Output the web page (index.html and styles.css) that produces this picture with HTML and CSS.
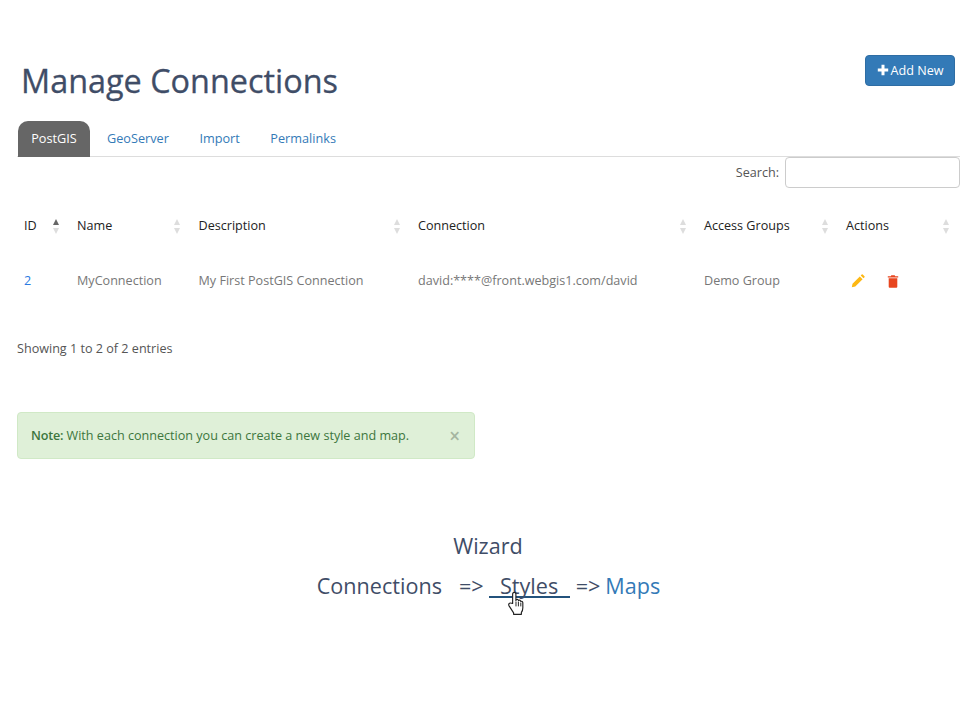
FILE: index.html
```html
<!DOCTYPE html>
<html lang="en">
<head>
<meta charset="utf-8">
<title>Manage Connections</title>
<link rel="stylesheet" href="styles.css">
</head>
<body>
<main class="page">
  <header class="head">
    <h1 class="title">Manage Connections</h1>
    <a class="btn-add" href="#"><svg class="plus" viewBox="0 0 12 12" width="12" height="12"><path d="M4.500 0.800h3v3.700h3.700v3H7.500v3.700h-3V7.500H0.800v-3h3.700z" fill="#fff"/></svg>Add New</a>
  </header>
  <nav class="tabs">
    <a class="tab active" href="#">PostGIS</a>
    <a class="tab" href="#">GeoServer</a>
    <a class="tab" href="#">Import</a>
    <a class="tab" href="#">Permalinks</a>
  </nav>
  <div class="search"><label class="search-label" for="q">Search:</label><input class="search-input" id="q" type="text"></div>
  <table class="grid">
    <colgroup><col class="c1"><col class="c2"><col class="c3"><col class="c4"><col class="c5"><col class="c6"></colgroup>
    <thead>
      <tr>
        <th>ID<span class="sort asc"></span></th>
        <th>Name<span class="sort"></span></th>
        <th>Description<span class="sort"></span></th>
        <th>Connection<span class="sort"></span></th>
        <th>Access Groups<span class="sort"></span></th>
        <th>Actions<span class="sort"></span></th>
      </tr>
    </thead>
    <tbody>
      <tr>
        <td><a class="id-link" href="#">2</a></td>
        <td>MyConnection</td>
        <td>My First PostGIS Connection</td>
        <td>david:****@front.webgis1.com/david</td>
        <td>Demo Group</td>
        <td class="actions">
          <div class="action-row">
            <svg viewBox="0 0 14 14" width="14" height="14"><path d="M0.800 13.200l0.700-3.500 7.300-7.300 2.800 2.800-7.300 7.300zM9.700 1.500l1-1q0.500-0.400 1 0l1.800 1.800q0.400 0.500 0 1l-1 1z" fill="#fdb813"/></svg>
            <svg viewBox="0 0 12 14" width="12" height="14"><path d="M0.800 2.200h3l0.500-1h3.400l0.500 1h3v1.300H0.800zM1.700 4.300h8.600v8.400q0 1-1 1H2.700q-1 0-1-1z" fill="#e8461f"/></svg>
          </div>
        </td>
      </tr>
    </tbody>
  </table>
  <p class="info">Showing 1 to 2 of 2 entries</p>
  <div class="note">
    <p class="note-text"><strong>Note:</strong> With each connection you can create a new style and map.</p>
    <span class="note-close">×</span>
  </div>
  <section class="wizard">
    <h2 class="wizard-title">Wizard</h2>
    <div class="wizard-steps">
      <span>Connections</span><span class="arrow">=&gt;</span><a class="step-hover" href="#">Styles<svg class="cursor" viewBox="0 0 18 26" width="18" height="25"><path d="M5.500 13V3.500q0-2 1.700-2t1.700 2V10l0.300-1q1.800-0.800 2.400 0.800 1.800-0.800 2.300 1 2-0.500 2.200 1.500v5q0 3-1.500 5v2H6.500v-1.500L1.800 15.500q-1-1.800 0.500-2.800 1.300-0.500 3.200 0.300z" fill="#fff" stroke="#222" stroke-width="1.200" stroke-linejoin="round"/><path d="M9 11v5M11.500 11v5M14 12v4" stroke="#222" stroke-width="1"/></svg></a><span class="arrow after">=&gt;</span><a class="step-link" href="#">Maps</a>
    </div>
  </section>
</main>
</body>
</html>
```

FILE: styles.css
```css
* { box-sizing: border-box; }
html, body { margin: 0; background: #fff; }
body {
  font-family: "Open Sans", "Noto Sans", sans-serif;
  font-size: 12.6px;
  color: #555;
  height: 704px;
  overflow: hidden;
}
a { text-decoration: none; }
.page { margin-left: 17px; width: 943px; padding-top: 55px; }
.head { display: flex; justify-content: space-between; align-items: flex-start; height: 66px; }
.title {
  margin: 3px 0 0 4px;
  font-size: 32.400px;
  line-height: 44px;
  font-weight: 500;
  -webkit-text-stroke: 0.3px #3f4d67;
  color: #3f4d67;
}
.btn-add {
  display: flex;
  align-items: center;
  gap: 2px;
  width: 90px;
  height: 31px;
  margin-right: 5px;
  padding-bottom: 1px;
  justify-content: center;
  background: #337ab7;
  border: 1px solid #2e6da4;
  border-radius: 4px;
  color: #fff;
}
.tabs { display: flex; height: 36px; border-bottom: 1px solid #ddd; }
.tab { padding: 0 15.250px; line-height: 35px; color: #337ab7; font-size: 12.700px; }
.tab.active {
  background: #666;
  color: #fff;
  width: 72px;
  padding: 0;
  text-align: center;
  height: 36px;
  border-radius: 10px 10px 0 0;
  margin: 0 1.750px 0 1px;
}
.search { display: flex; justify-content: flex-end; align-items: center; gap: 6px; height: 31px; }
.search-label { color: #555; padding-bottom: 1px; }
.search-input {
  width: 175px;
  height: 31px;
  border: 1px solid #ccc;
  border-radius: 4px;
  background: #fff;
  padding: 0;
}
.grid { width: 943px; table-layout: fixed; border-collapse: collapse; margin-top: 7px; }
.c1 { width: 53px; }
.c2 { width: 121.500px; }
.c3 { width: 219.500px; }
.c4 { width: 286px; }
.c5 { width: 142px; }
.c6 { width: 121px; }
th {
  position: relative;
  height: 60px;
  padding: 0 7px;
  text-align: left;
  font-weight: 400;
  font-size: 12.6px;
  color: #222;
}
td { height: 51px; padding: 0 7px; font-size: 12.6px; color: #777; white-space: nowrap; }
.id-link { color: #2a7ae2; }
.sort {
  position: absolute;
  right: 10.500px;
  top: 24px;
  width: 7px;
  height: 15px;
}
.sort::before, .sort::after {
  content: "";
  position: absolute;
  left: 0;
  border-left: 3.500px solid transparent;
  border-right: 3.500px solid transparent;
}
.sort::before { top: 0; border-bottom: 6.500px solid #ddd; }
.sort::after { top: 8.500px; border-top: 6.500px solid #ddd; }
.sort.asc::before { border-bottom-color: #666; }
.actions { padding-left: 12px; }
.action-row { display: flex; align-items: center; gap: 22px; }
.info { margin: 34px 0 0 0; line-height: 18px; color: #555; }
.note {
  display: flex;
  justify-content: space-between;
  align-items: center;
  width: 458px;
  height: 47px;
  margin-top: 54px;
  padding: 0 14px 0 13px;
  background: #dff0d8;
  border: 1px solid #d0e9c6;
  border-radius: 4px;
  color: #3c763d;
}
.note-text { margin: 0 0 1px; }
.note-text strong { font-weight: 600; letter-spacing: -0.2px; }
.note-close { color: #a5b5a0; font-size: 19px; font-weight: 600; line-height: 1; margin-top: 2px; }
.wizard { width: 943px; margin-top: 72px; text-align: center; color: #3f4d67; }
.wizard-title { margin: 0; font-size: 21.600px; line-height: 30px; font-weight: 400; padding-right: 1px; }
.wizard-steps {
  display: flex;
  justify-content: center;
  align-items: flex-start;
  margin-top: 10px;
  font-size: 21.600px;
  line-height: 30px;
}
.arrow { margin-left: 17px; margin-right: 5px; }
.arrow.after { margin-left: 6px; }
.step-hover {
  position: relative;
  display: block;
  width: 81px;
  height: 27px;
  text-align: center;
  color: #3f4d67;
  border-bottom: 2px solid #23527c;
}
.step-link { color: #337ab7; }
.cursor { position: absolute; left: 18px; top: 20px; }
```
